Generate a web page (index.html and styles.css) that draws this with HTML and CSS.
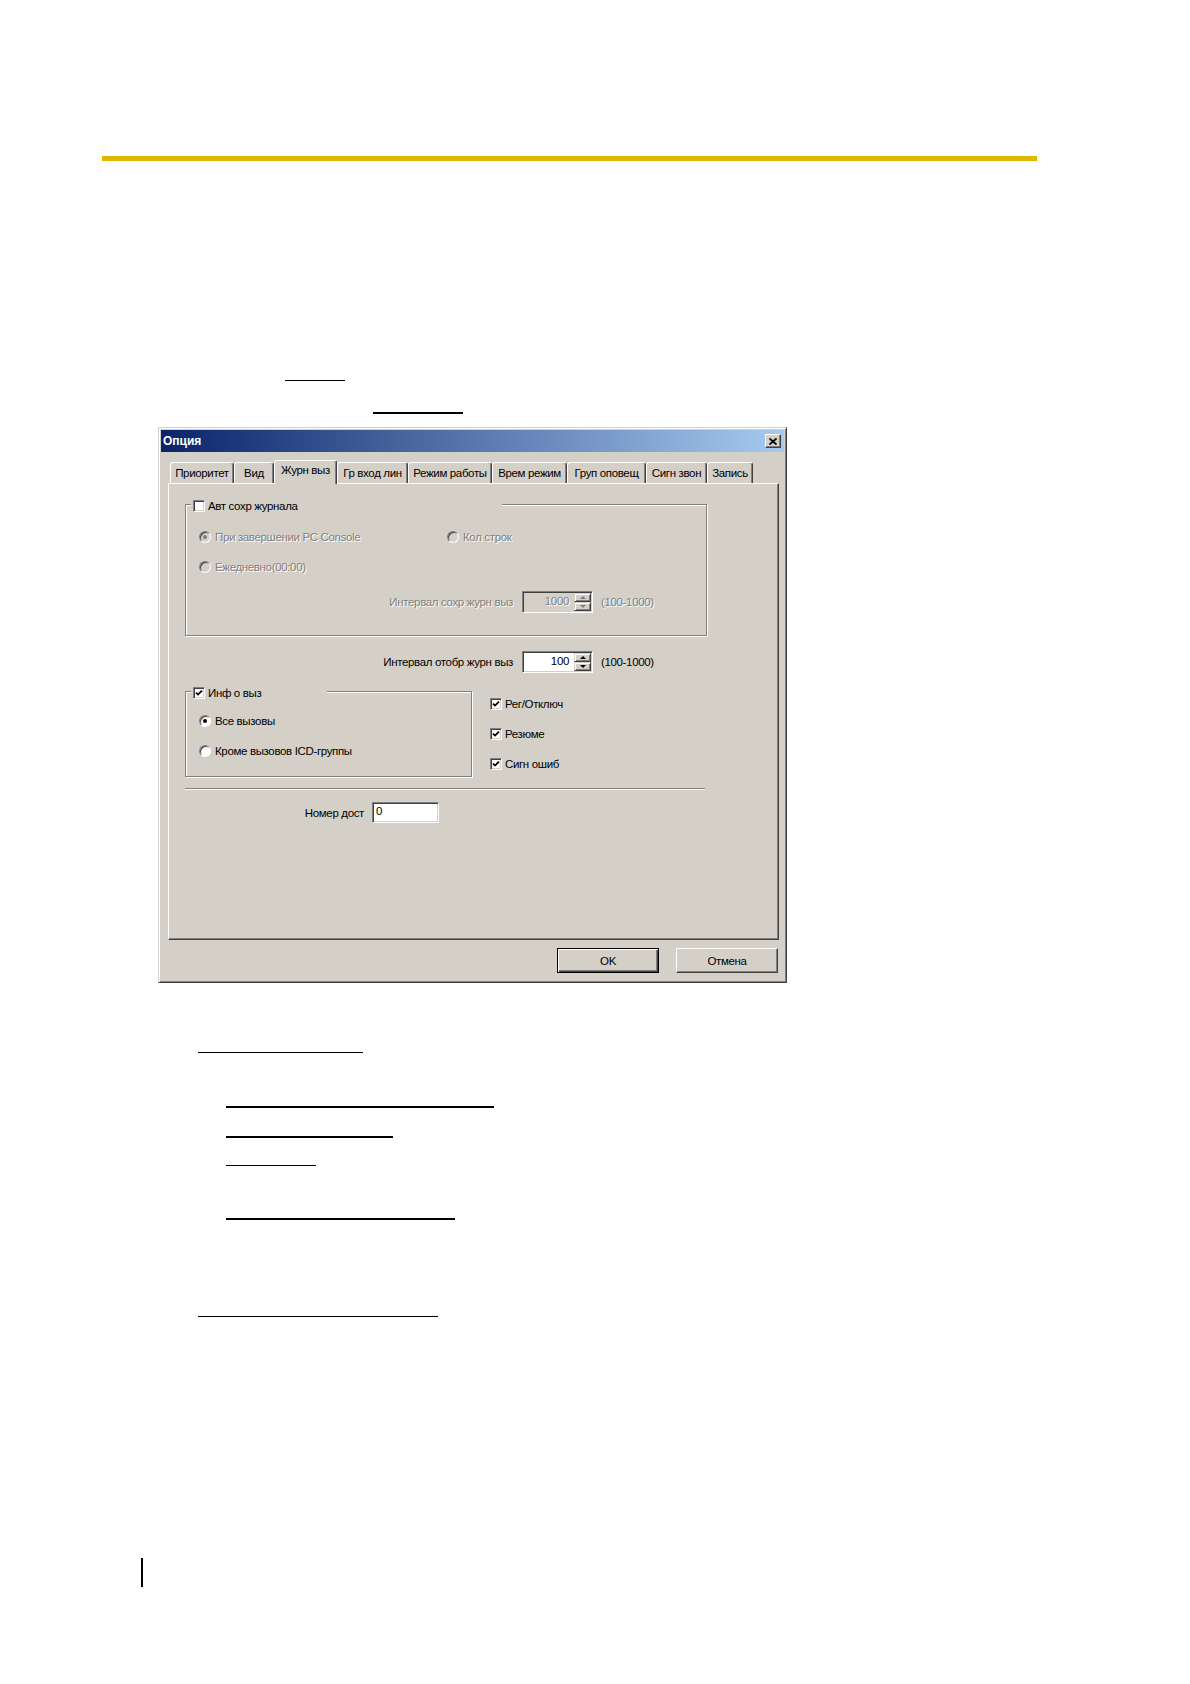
FILE: index.html
```html
<!DOCTYPE html>
<html lang="ru">
<head>
    <meta charset="UTF-8">
    <title>Опция</title>
    <link rel="stylesheet" href="styles.css">
</head>
<body>
    <div class="page">
        <div class="top-rule"></div>
        <div class="uline l1"></div>
        <div class="uline thick l2"></div>

        <div class="dialog">
            <div class="titlebar">
                <span class="title">Опция</span>
                <span class="close-btn">
                    <svg width="8" height="7" viewBox="0 0 8 7"><path d="M0.5 0.5 L7.5 6.5 M7.5 0.5 L0.5 6.5" stroke="#000" stroke-width="1.8"/></svg>
                </span>
            </div>

            <div class="dlg-body">
                <div class="tabs">
                    <div class="tab t-prio">Приоритет</div>
                    <div class="tab t-view">Вид</div>
                    <div class="tab t-log active">Журн выз</div>
                    <div class="tab t-lines">Гр вход лин</div>
                    <div class="tab t-mode">Режим работы</div>
                    <div class="tab t-time">Врем режим</div>
                    <div class="tab t-page">Груп оповещ</div>
                    <div class="tab t-ring">Сигн звон</div>
                    <div class="tab t-rec">Запись</div>
                </div>

                <div class="tab-panel">
                    <fieldset class="group group-save">
                        <legend><span class="legend-inner"><span class="check"></span>Авт сохр журнала</span></legend>
                        <div class="opt-row disabled">
                            <span class="opt opt-first"><span class="radio on"></span>При завершении PC Console</span>
                            <span class="opt"><span class="radio"></span>Кол строк</span>
                        </div>
                        <div class="opt-row disabled gap-row">
                            <span class="opt"><span class="radio"></span>Ежедневно(00:00)</span>
                        </div>
                        <div class="spin-row disabled inner-spin">
                            <span class="spin-label">Интервал сохр журн выз</span>
                            <div class="spin">
                                <span class="spin-value">1000</span>
                                <span class="spin-btns"><span class="spin-btn up"></span><span class="spin-btn down"></span></span>
                            </div>
                            <span class="range">(100-1000)</span>
                        </div>
                    </fieldset>

                    <div class="spin-row outer-spin">
                        <span class="spin-label">Интервал отобр журн выз</span>
                        <div class="spin active">
                            <span class="spin-value">100</span>
                            <span class="spin-btns"><span class="spin-btn up"></span><span class="spin-btn down"></span></span>
                        </div>
                        <span class="range">(100-1000)</span>
                    </div>

                    <div class="info-row">
                        <fieldset class="group group-info">
                            <legend><span class="legend-inner"><span class="check"><svg viewBox="0 0 8 8"><polyline points="1,3.6 3,5.6 7,1.6" fill="none" stroke="#000" stroke-width="1.8"/></svg></span>Инф о выз</span></legend>
                            <div class="opt-row">
                                <span class="opt"><span class="radio on"></span>Все вызовы</span>
                            </div>
                            <div class="opt-row gap-row">
                                <span class="opt"><span class="radio"></span>Кроме вызовов ICD-группы</span>
                            </div>
                        </fieldset>
                        <div class="check-col">
                            <span class="check-item"><span class="check"><svg viewBox="0 0 8 8"><polyline points="1,3.6 3,5.6 7,1.6" fill="none" stroke="#000" stroke-width="1.8"/></svg></span>Рег/Отключ</span>
                            <span class="check-item"><span class="check"><svg viewBox="0 0 8 8"><polyline points="1,3.6 3,5.6 7,1.6" fill="none" stroke="#000" stroke-width="1.8"/></svg></span>Резюме</span>
                            <span class="check-item"><span class="check"><svg viewBox="0 0 8 8"><polyline points="1,3.6 3,5.6 7,1.6" fill="none" stroke="#000" stroke-width="1.8"/></svg></span>Сигн ошиб</span>
                        </div>
                    </div>

                    <div class="separator"></div>

                    <div class="access-row">
                        <span class="access-label">Номер дост</span>
                        <div class="edit">0</div>
                    </div>
                </div>

                <div class="buttons">
                    <button class="btn default">OK</button>
                    <button class="btn">Отмена</button>
                </div>
            </div>
        </div>

        <div class="uline l3"></div>
        <div class="uline thick l4"></div>
        <div class="uline thick l5"></div>
        <div class="uline l6"></div>
        <div class="uline thick l7"></div>
        <div class="uline l8"></div>
        <div class="side-mark"></div>
    </div>
</body>
</html>
```

FILE: styles.css
```css
* {
    margin: 0;
    padding: 0;
    box-sizing: border-box;
}

body {
    background: #ffffff;
    font-family: "Liberation Sans", Arial, sans-serif;
}

.page {
    width: 1190px;
    height: 1684px;
    padding-top: 156px;
    overflow: hidden;
}

.top-rule {
    margin-left: 102px;
    width: 935px;
    height: 5px;
    background: #e0b700;
}

/* link underlines of the document page */
.uline {
    height: 1px;
    background: #000;
}

.uline.thick {
    height: 2px;
}

.l1 { margin: 219px 0 0 285px; width: 60px; }
.l2 { margin: 31px 0 0 373px; width: 90px; }
.l3 { margin: 69px 0 0 198px; width: 165px; }
.l4 { margin: 53px 0 0 226px; width: 268px; }
.l5 { margin: 28px 0 0 226px; width: 167px; }
.l6 { margin: 27px 0 0 226px; width: 90px; }
.l7 { margin: 52px 0 0 226px; width: 229px; }
.l8 { margin: 96px 0 0 198px; width: 240px; }

.side-mark {
    margin: 241px 0 0 141px;
    width: 2px;
    height: 29px;
    background: #000;
}

/* dialog window */
.dialog {
    margin: 13px 0 0 158px;
    width: 629px;
    padding: 2px;
    background: #d4d0c8;
    border: 1px solid;
    border-color: #d4d0c8 #404040 #404040 #d4d0c8;
    box-shadow: inset 1px 1px #ffffff, inset -1px -1px #808080;
    font-size: 11.5px;
    letter-spacing: -0.35px;
    color: #000;
}

.titlebar {
    height: 22px;
    display: flex;
    align-items: center;
    justify-content: space-between;
    padding: 0 3px 0 2px;
    background: linear-gradient(to right, #0a246a, #a6caf0);
}

.title {
    color: #ffffff;
    font-weight: bold;
    font-size: 12px;
    letter-spacing: 0;
}

.close-btn {
    width: 16px;
    height: 14px;
    display: flex;
    align-items: center;
    justify-content: center;
    background: #d4d0c8;
    border: 1px solid;
    border-color: #ffffff #404040 #404040 #ffffff;
    box-shadow: inset -1px -1px #808080;
}

.dlg-body {
    padding: 8px 0 7px 7px;
}

.tabs {
    display: flex;
    align-items: flex-start;
    height: 24px;
    margin-left: 2px;
}

.tab {
    flex: none;
    height: 21px;
    margin-top: 2px;
    padding-top: 1px;
    line-height: 18px;
    text-align: center;
    white-space: nowrap;
    border-top: 1px solid #ffffff;
    border-left: 1px solid #ffffff;
    border-right: 1px solid #404040;
    border-radius: 3px 3px 0 0;
    box-shadow: inset -1px 0 #808080;
}

.t-prio { width: 64px; }
.t-view { width: 40px; }
.t-log { width: 63px; }
.t-lines { width: 71px; }
.t-mode { width: 84px; }
.t-time { width: 75px; }
.t-page { width: 79px; }
.t-ring { width: 61px; }
.t-rec { width: 46px; }

.tab.active {
    position: relative;
    z-index: 1;
    height: 24px;
    margin-top: 0;
    padding-top: 0;
    background: #d4d0c8;
}

.tab-panel {
    width: 611px;
    height: 457px;
    margin-top: -1px;
    padding: 10px 0 0 16px;
    border: 1px solid;
    border-color: #ffffff #404040 #404040 #ffffff;
    box-shadow: inset -1px -1px #808080;
}

/* etched group boxes */
.group {
    margin: 0;
    min-width: 0;
    border: 1px solid #808080;
    box-shadow: inset 1px 1px #ffffff, 1px 1px #ffffff;
}

.group legend {
    display: flex;
    align-items: flex-end;
    height: 20px;
    padding: 0 2px;
    background: #d4d0c8;
}

.legend-inner {
    display: flex;
    align-items: center;
    gap: 3px;
    height: 16px;
    line-height: 16px;
}

.group-save {
    width: 522px;
    padding: 13px 0 22px 5px;
}

.group-save legend {
    width: 311px;
}

.group-info {
    width: 287px;
    padding: 10px 0 15px 5px;
}

.group-info legend {
    width: 136px;
}

.opt-row {
    display: flex;
    align-items: center;
    height: 20px;
    padding-left: 8px;
}

.gap-row {
    margin-top: 10px;
}

.opt {
    display: flex;
    align-items: center;
    gap: 4px;
    white-space: nowrap;
}

.opt-first {
    width: 248px;
}

.disabled {
    color: #808080;
    text-shadow: 1px 1px #ffffff;
}

.check {
    width: 12px;
    height: 12px;
    flex: none;
    display: flex;
    align-items: center;
    justify-content: center;
    background: #ffffff;
    border: 1px solid;
    border-color: #808080 #ffffff #ffffff #808080;
    box-shadow: inset 1px 1px #404040, inset -1px -1px #d4d0c8;
}

.check svg {
    width: 8px;
    height: 8px;
}

.radio {
    width: 12px;
    height: 12px;
    flex: none;
    display: flex;
    align-items: center;
    justify-content: center;
    border-radius: 50%;
    background: #ffffff;
    border: 1px solid;
    border-color: #808080 #ffffff #ffffff #808080;
    box-shadow: inset 1px 1px #404040;
}

.radio.on::after {
    content: '';
    width: 4px;
    height: 4px;
    border-radius: 50%;
    background: #000;
}

.disabled .radio {
    background: #d4d0c8;
}

.disabled .radio.on::after {
    background: #808080;
}

/* spin rows */
.spin-row {
    display: flex;
    align-items: center;
    height: 22px;
}

.inner-spin {
    margin-top: 14px;
}

.inner-spin .spin-label {
    width: 322px;
}

.outer-spin {
    margin-top: 15px;
}

.outer-spin .spin-label {
    width: 328px;
}

.spin-label {
    text-align: right;
    margin-right: 9px;
    white-space: nowrap;
}

.spin {
    width: 71px;
    height: 22px;
    display: flex;
    padding: 1px;
    background: #d4d0c8;
    border: 1px solid;
    border-color: #808080 #ffffff #ffffff #808080;
    box-shadow: inset 1px 1px #404040, inset -1px -1px #d4d0c8;
}

.spin.active {
    background: #ffffff;
}

.spin-value {
    flex: 1;
    text-align: right;
    padding-right: 5px;
    line-height: 17px;
}

.spin-btns {
    width: 17px;
    display: flex;
    flex-direction: column;
}

.spin-btn {
    flex: 1;
    display: flex;
    align-items: center;
    justify-content: center;
    background: #d4d0c8;
    border: 1px solid;
    border-color: #d4d0c8 #404040 #404040 #d4d0c8;
    box-shadow: inset 1px 1px #ffffff, inset -1px -1px #808080;
}

.spin-btn::after {
    content: '';
    border-left: 3px solid transparent;
    border-right: 3px solid transparent;
}

.spin-btn.up::after {
    border-bottom: 3px solid #000;
}

.spin-btn.down::after {
    border-top: 3px solid #000;
}

.disabled .spin-btn.up::after {
    border-bottom-color: #808080;
}

.disabled .spin-btn.down::after {
    border-top-color: #808080;
}

.range {
    margin-left: 8px;
    white-space: nowrap;
}

.info-row {
    display: flex;
    align-items: flex-start;
    margin-top: 8px;
}

.check-col {
    margin-left: 18px;
    padding-top: 13px;
    display: flex;
    flex-direction: column;
    gap: 10px;
}

.check-item {
    display: flex;
    align-items: center;
    gap: 3px;
    height: 20px;
    white-space: nowrap;
}

.separator {
    width: 520px;
    margin-top: 11px;
    border-top: 1px solid #808080;
    border-bottom: 1px solid #ffffff;
}

.access-row {
    display: flex;
    align-items: center;
    margin-top: 12px;
}

.access-label {
    width: 179px;
    margin-right: 8px;
    text-align: right;
}

.edit {
    width: 67px;
    height: 21px;
    padding: 0 3px;
    line-height: 17px;
    background: #ffffff;
    border: 1px solid;
    border-color: #808080 #ffffff #ffffff #808080;
    box-shadow: inset 1px 1px #404040, inset -1px -1px #d4d0c8;
}

.buttons {
    width: 611px;
    display: flex;
    justify-content: flex-end;
    gap: 17px;
    margin-top: 8px;
    padding-right: 1px;
}

.btn {
    width: 102px;
    height: 25px;
    font: inherit;
    letter-spacing: inherit;
    color: #000;
    background: #d4d0c8;
    border: 1px solid;
    border-color: #ffffff #404040 #404040 #ffffff;
    box-shadow: inset -1px -1px #808080;
}

.btn.default {
    border-color: #000;
    box-shadow: inset 1px 1px #ffffff, inset -1px -1px #404040, inset -2px -2px #808080;
}
```
